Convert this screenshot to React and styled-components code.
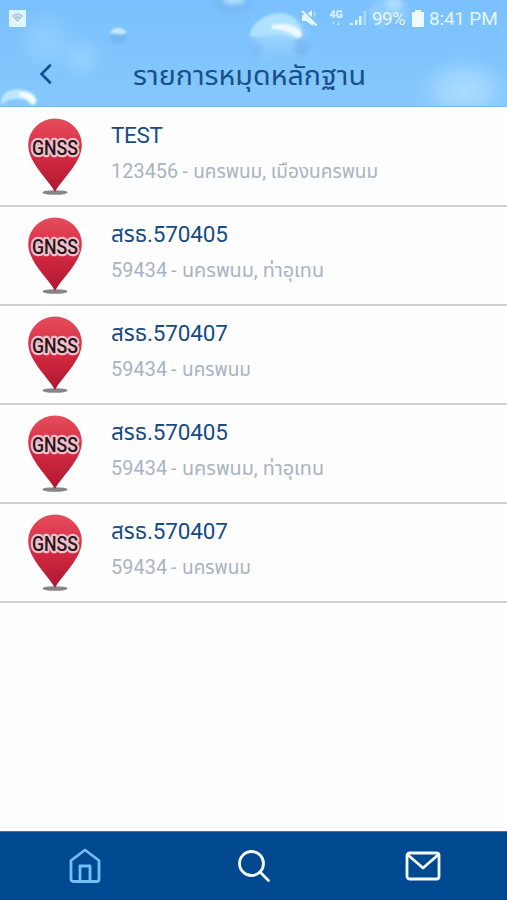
import React from 'react'
import styled, { createGlobalStyle } from 'styled-components'

const items = [
    { id: 1, thai: '', name: 'TEST', code: '123456', place: 'นครพนม, เมืองนครพนม', width: 185 },
    { id: 2, thai: 'สรธ', name: '.570405', code: '59434', place: 'นครพนม, ท่าอุเทน', width: 142 },
    { id: 3, thai: 'สรธ', name: '.570407', code: '59434', place: 'นครพนม', width: 69 },
    { id: 4, thai: 'สรธ', name: '.570405', code: '59434', place: 'นครพนม, ท่าอุเทน', width: 142 },
    { id: 5, thai: 'สรธ', name: '.570407', code: '59434', place: 'นครพนม', width: 69 },
]

const Sky = () => (
    <SkyArt viewBox="0 0 507 107" preserveAspectRatio="none" aria-hidden="true">
        <defs>
            <linearGradient id="sky" x1="0" y1="0" x2="0" y2="1">
                <stop offset="0" stopColor="#7ac1fd" />
                <stop offset="1" stopColor="#85c8fd" />
            </linearGradient>
            <radialGradient id="glow">
                <stop offset="0" stopColor="#b0e1ff" stopOpacity="0.9" />
                <stop offset="0.5" stopColor="#a6daff" stopOpacity="0.65" />
                <stop offset="1" stopColor="#95d0ff" stopOpacity="0" />
            </radialGradient>
            <linearGradient id="drop" x1="0" y1="0" x2="0" y2="1">
                <stop offset="0" stopColor="#b4e3ff" />
                <stop offset="0.5" stopColor="#9ed4ff" />
                <stop offset="1" stopColor="#84c6fc" stopOpacity="0" />
            </linearGradient>
            <filter id="soft" x="-30%" y="-30%" width="160%" height="160%">
                <feGaussianBlur stdDeviation="2.4" />
            </filter>
            <filter id="edge" x="-30%" y="-30%" width="160%" height="160%">
                <feGaussianBlur stdDeviation="1" />
            </filter>
        </defs>
        <rect width="507" height="107" fill="url(#sky)" />
        <circle cx="46" cy="41" r="33" fill="url(#glow)" opacity="0.4" />
        <circle cx="81" cy="58" r="26" fill="url(#glow)" opacity="0.45" />
        <ellipse cx="464" cy="90" rx="50" ry="36" fill="url(#glow)" />
        <g filter="url(#soft)">
            <ellipse cx="233" cy="5" rx="19" ry="8" fill="#6dafee" opacity="0.5" />
            <ellipse cx="234" cy="0" rx="11" ry="4" fill="#b5e2ff" />
            <circle cx="279" cy="41" r="27" fill="url(#drop)" opacity="0.8" />
            <ellipse cx="256" cy="48" rx="7" ry="9" fill="#66abed" opacity="0.35" />
            <ellipse cx="301" cy="46" rx="7" ry="11" fill="#61a4ed" opacity="0.45" />
            <ellipse cx="389" cy="12" rx="20" ry="16" fill="#a8ddff" opacity="0.4" />
            <ellipse cx="395" cy="23" rx="11" ry="5" fill="#6faef0" opacity="0.5" />
            <ellipse cx="394" cy="4" rx="8" ry="7" fill="#c0e7ff" opacity="0.6" />
        </g>
        <g filter="url(#edge)">
            <path d="M250 36C250 24 265 14 279 14C293 14 302 23 302 36C299 41 294 38 287 36C275 33 263 38 250 36Z" fill="#b3e4ff" opacity="0.85" />
            <path d="M272 25Q295 21 302 34Q300 40 295 36Q286 30 272 29Z" fill="#ecfaff" />
            <path d="M1 105Q1 90 17 89Q34 90 37 100Q36 105 32 106Q25 97 14 99Q6 100 1 105Z" fill="#bbe8ff" />
            <path d="M19 92Q34 91 36 102Q34 105 31 103Q28 98 20 96Z" fill="#f6fdff" />
            <ellipse cx="118" cy="37" rx="8.5" ry="7.5" fill="#72b5f3" opacity="0.8" />
            <path d="M110 34Q111 28 118 28Q125 28 126 33Q123 35 118 34Q113 33 110 34Z" fill="#c5ecff" />
        </g>
        <rect y="106" width="507" height="1" fill="#7bb8e8" />
    </SkyArt>
)

const Pin = () => (
    <svg width="56" height="78" viewBox="0 0 56 78" overflow="visible">
        <defs>
            <linearGradient id="pin" x1="0" y1="0" x2="0" y2="1">
                <stop offset="0" stopColor="#e54d5c" />
                <stop offset="0.5" stopColor="#d42a42" />
                <stop offset="1" stopColor="#ad1730" />
            </linearGradient>
        </defs>
        <ellipse cx="28" cy="74.5" rx="12.5" ry="2.3" fill="#858687" />
        <path d="M28 74C22 62 1.2 45 1.2 27A26.8 26.5 0 0 1 54.8 27C54.8 45 34 62 28 74Z" fill="url(#pin)" />
        <PinText x="5" y="37" textLength="46" lengthAdjust="spacingAndGlyphs">GNSS</PinText>
    </svg>
)

const App = () => {
    return (
        <Screen>
            <GlobalStyle />
            <Header>
                <Sky />
                <StatusBar>
                    <svg width="17" height="17" viewBox="0 0 17 17">
                        <rect width="17" height="17" rx="1" fill="#e1f5ff" />
                        <path d="M3 6.3Q8.5 1.7 14 6.3L8.5 12Z" fill="#c3dde8" />
                        <path d="M3 6.3Q8.5 1.7 14 6.3M5 8.5Q8.5 5.5 12 8.5M7 10.6Q8.5 9.4 10 10.6" fill="none" stroke="#9dbccb" strokeWidth="1" />
                    </svg>
                    <StatusRight>
                        <svg width="18" height="18" viewBox="0 0 18 18">
                            <path d="M2 6H5L13 14V17L6 12H2ZM12 1V8L7.5 4.5Z" fill="#e1f5ff" />
                            <path d="M2 2L16.5 16.5" stroke="#e1f5ff" strokeWidth="2.4" />
                            <path d="M14 3Q15.5 5 14.5 7.5" fill="none" stroke="#c9eaff" strokeWidth="1.2" />
                        </svg>
                        <Network>
                            4G
                            <svg width="10" height="4" viewBox="0 0 10 4">
                                <path d="M1 0H4L2.5 3ZM6 3L7.5 0L9 3Z" fill="#b6e2ff" />
                            </svg>
                        </Network>
                        <svg width="17" height="16" viewBox="0 0 17 16">
                            <path d="M0 13H3V15H0ZM5 10H7.5V15H5ZM9 6H11.5V15H9Z" fill="#dbf3ff" />
                            <path d="M13.5 1H16V15H13.5Z" fill="#a7daff" />
                        </svg>
                        <Battery>99%</Battery>
                        <svg width="12" height="17" viewBox="0 0 12 17">
                            <path d="M3 0H9V2H11Q12 2 12 3V16Q12 17 11 17H1Q0 17 0 16V3Q0 2 1 2H3Z" fill="#effaff" />
                        </svg>
                        <Clock>8:41 PM</Clock>
                    </StatusRight>
                </StatusBar>
                <TitleBar>
                    <svg width="13" height="20" viewBox="0 0 13 20">
                        <path d="M11 1.5L2.5 10L11 18.5" fill="none" stroke="#10508c" strokeWidth="2.6" strokeLinecap="round" />
                    </svg>
                    <Title width="235" height="44">
                        <text x="0" y="29" textLength="233" lengthAdjust="spacingAndGlyphs">รายการหมุดหลักฐาน</text>
                    </Title>
                </TitleBar>
            </Header>
            <List>
                {items.map(item => (
                    <Row key={item.id}>
                        <Pin />
                        <Info>
                            <Name width="300" height="34">
                                {item.thai && <text x="0" y="25" textLength="36" lengthAdjust="spacingAndGlyphs">{item.thai}</text>}
                                <text x={item.thai ? 36 : 0} y="25" textLength={item.thai ? 81 : 52}>{item.name}</text>
                            </Name>
                            <Place width="300" height="34">
                                <text x="0" y="26" textLength={item.code.length * 11.2}>{item.code}</text>
                                <text x={item.code.length * 11.2 + 4} y="26">-</text>
                                <text x={item.code.length * 11.2 + 15} y="26" textLength={item.width} lengthAdjust="spacingAndGlyphs">{item.place}</text>
                            </Place>
                        </Info>
                    </Row>
                ))}
            </List>
            <TabBar>
                <Tab $active>
                    <svg width="34" height="36" viewBox="0 0 34 36">
                        <path d="M3 12.5L17 2L31 12.5V31Q31 33.5 28.5 33.5H5.5Q3 33.5 3 31ZM12 33V18H22V33" />
                    </svg>
                </Tab>
                <Tab>
                    <svg width="34" height="36" viewBox="0 0 34 36">
                        <circle cx="14.5" cy="15.5" r="12" />
                        <path d="M23 24L31.5 32.5" />
                    </svg>
                </Tab>
                <Tab>
                    <svg width="36" height="32" viewBox="0 0 36 32">
                        <rect x="2" y="3" width="32" height="26" rx="2.5" />
                        <path d="M3 5L18 18L33 5" />
                    </svg>
                </Tab>
            </TabBar>
        </Screen>
    )
}

const GlobalStyle = createGlobalStyle`
*{
    box-sizing: border-box;
}
body{
    margin: 0;
    font-family: Roboto, "Noto Sans Thai", "Noto Sans", sans-serif;
}
svg{
    display: block;
    flex-shrink: 0;
}
`

const Screen = styled.div`
width: 100%;
height: 900px;
display: flex;
flex-direction: column;
background: #fefefe;
overflow: hidden;
`

const Header = styled.header`
position: relative;
height: 107px;
flex-shrink: 0;
`

const SkyArt = styled.svg`
position: absolute;
top: 0;
left: 0;
width: 100%;
height: 100%;
`

const StatusBar = styled.div`
position: relative;
height: 36px;
padding: 0 9px;
display: flex;
align-items: center;
justify-content: space-between;
color: #e5f6ff;
`

const StatusRight = styled.div`
display: flex;
align-items: center;
`

const Network = styled.div`
width: 14px;
margin: 0 7px 0 11px;
display: flex;
flex-direction: column;
align-items: center;
gap: 2px;
font-size: 10.5px;
line-height: 10px;
font-weight: 700;
`

const Battery = styled.span`
width: 34px;
margin: 0 6px 0 5px;
font-size: 19px;
letter-spacing: -0.8px;
white-space: nowrap;
`

const Clock = styled.span`
width: 69px;
margin-left: 5px;
font-size: 19px;
letter-spacing: -0.2px;
white-space: nowrap;
`

const TitleBar = styled.div`
position: relative;
height: 71px;
padding-left: 39px;
display: flex;
align-items: flex-start;
svg:first-child{
    margin-top: 28px;
}
`

const Title = styled.svg`
margin: 20px 0 0 81px;
overflow: visible;
font-size: 26px;
fill: #174f88;
`

const List = styled.main`
flex: 1;
padding-top: 1px;
`

const Row = styled.div`
height: 99.1px;
padding: 10px 0 0 27px;
display: flex;
align-items: flex-start;
border-bottom: 2px solid #d0d1d5;
`

const Info = styled.div`
margin-left: 28px;
`

const Name = styled.svg`
overflow: visible;
font-size: 22.5px;
fill: #174b84;
`

const Place = styled.svg`
overflow: visible;
font-size: 19.8px;
fill: #a8b3c2;
`

const PinText = styled.text`
font-family: Roboto, sans-serif;
font-size: 19.4px;
font-weight: 500;
fill: #29141c;
stroke: #efc0c9;
stroke-width: 4.5px;
stroke-linejoin: round;
paint-order: stroke;
`

const TabBar = styled.nav`
height: 69px;
flex-shrink: 0;
display: flex;
background: #004990;
border-top: 1px solid #3d78ad;
`

const Tab = styled.div`
flex: 1;
display: flex;
align-items: center;
justify-content: center;
svg{
    fill: none;
    stroke: ${props => (props.$active ? '#75bdf6' : '#f5fcff')};
    stroke-width: 2.8px;
    stroke-linecap: round;
    stroke-linejoin: round;
}
`

export default App
